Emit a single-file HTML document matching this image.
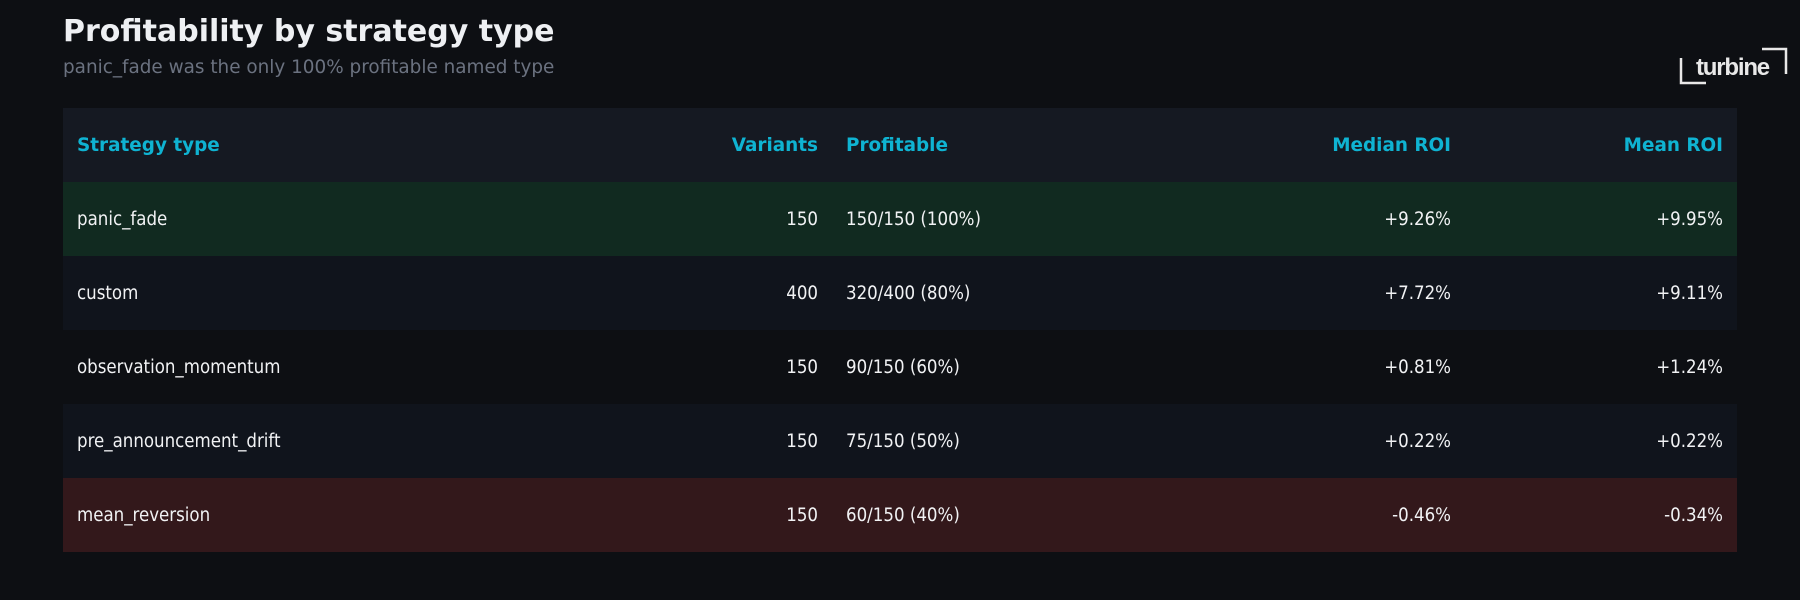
<!DOCTYPE html>
<html><head><meta charset="utf-8"><style>
body{margin:0;width:1800px;height:600px;background:#0d0f13;font-family:"DejaVu Sans","Liberation Sans",sans-serif;position:relative;overflow:hidden}
h1{position:absolute;left:63px;top:14px;margin:0;font-size:30px;font-weight:bold;color:#eef0f3}
.sub{position:absolute;left:63px;top:57px;font-size:18.4px;color:#6b7280}
table{position:absolute;left:63px;top:108px;width:1674px;border-collapse:collapse;table-layout:fixed}
td,th{height:74px;padding:0 14px;white-space:nowrap}
td{font-family:"DejaVu Sans Condensed","DejaVu Sans",sans-serif;font-stretch:condensed;font-size:18.5px;color:#f1f2f4}
th{color:#0fb3d2;font-weight:bold;text-align:left;font-size:18.4px}
.r{text-align:right}
tr.h{background:#151922}
tr.g{background:#112a20}
tr.a{background:#10141c}
tr.b{background:#0d0f13}
tr.red{background:#33181b}
</style></head><body>
<h1>Profitability by strategy type</h1>
<div class="sub">panic_fade was the only 100% profitable named type</div>
<svg style="position:absolute;left:1678px;top:46px" width="112" height="40">
<path d="M3 12 V37 H28" stroke="#e8e8e8" stroke-width="2.5" fill="none"/>
<path d="M84 3 H108 V28" stroke="#e8e8e8" stroke-width="2.5" fill="none"/>
<text x="18" y="29" font-family="Liberation Sans,sans-serif" font-weight="bold" font-size="24" fill="#e8e8e8" letter-spacing="-1.2">turbine</text>
</svg>
<table>
<colgroup><col style="width:435px"><col style="width:334px"><col style="width:303px"><col style="width:330px"><col style="width:272px"></colgroup>
<tr class="h"><th>Strategy type</th><th class="r">Variants</th><th>Profitable</th><th class="r">Median ROI</th><th class="r">Mean ROI</th></tr>
<tr class="g"><td>panic_fade</td><td class="r">150</td><td>150/150 (100%)</td><td class="r">+9.26%</td><td class="r">+9.95%</td></tr>
<tr class="a"><td>custom</td><td class="r">400</td><td>320/400 (80%)</td><td class="r">+7.72%</td><td class="r">+9.11%</td></tr>
<tr class="b"><td>observation_momentum</td><td class="r">150</td><td>90/150 (60%)</td><td class="r">+0.81%</td><td class="r">+1.24%</td></tr>
<tr class="a"><td>pre_announcement_drift</td><td class="r">150</td><td>75/150 (50%)</td><td class="r">+0.22%</td><td class="r">+0.22%</td></tr>
<tr class="red"><td>mean_reversion</td><td class="r">150</td><td>60/150 (40%)</td><td class="r">-0.46%</td><td class="r">-0.34%</td></tr>
</table>
</body></html>
